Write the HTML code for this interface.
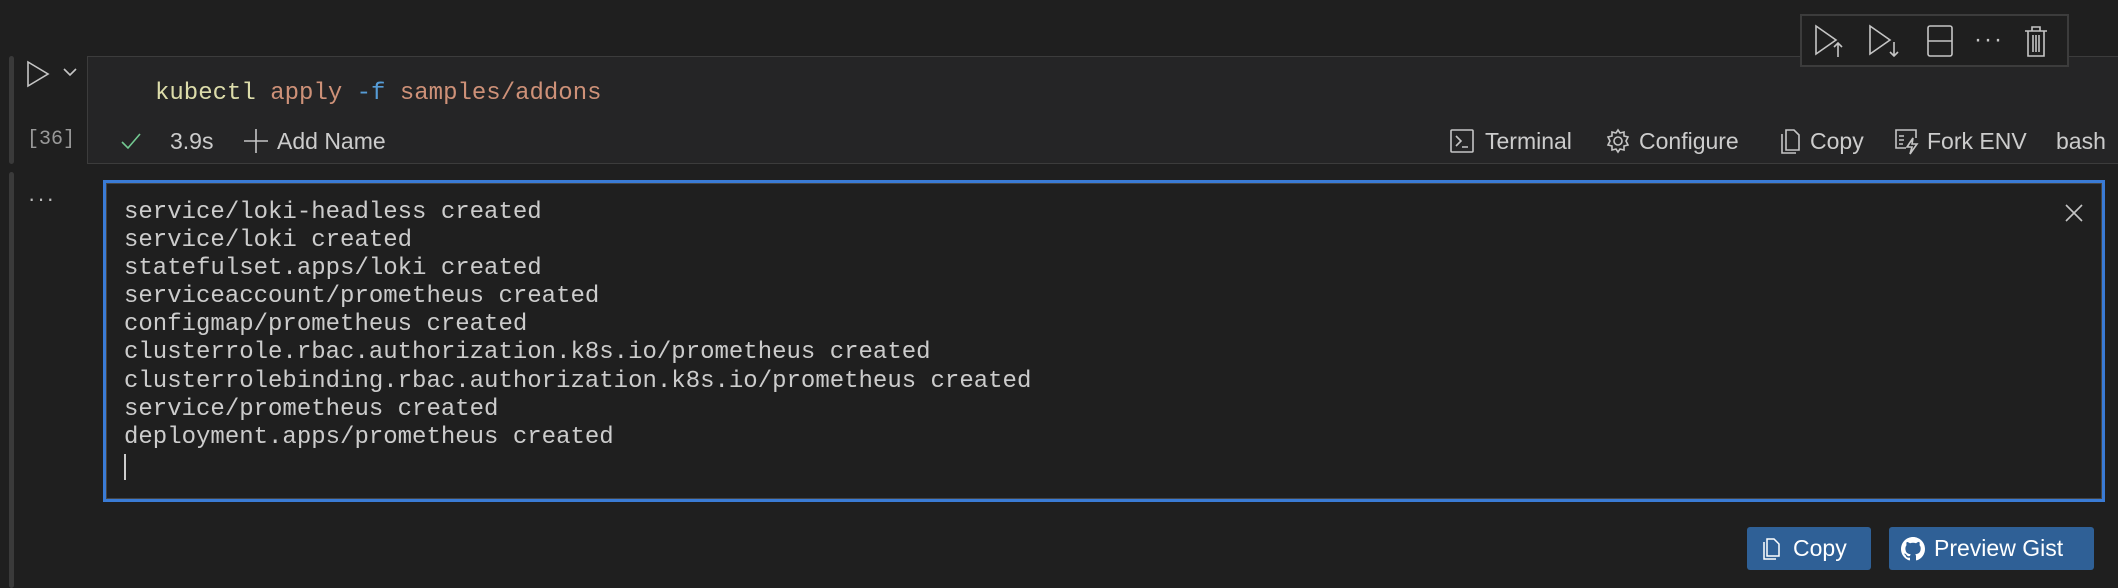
<!DOCTYPE html>
<html><head><style>
body{margin:0;width:2118px;height:588px;background:#1f1f1f;position:relative;overflow:hidden;font-family:"Liberation Sans",sans-serif;color:#cccccc}
.a{position:absolute}
.mono{font-family:"Liberation Mono",monospace}
.bar{position:absolute;left:9px;width:5px;background:#3a3a3a;border-radius:3px}
.ui{font-size:23px;color:#cccccc;line-height:26px}
svg{position:absolute;fill:none;stroke:#c5c5c5;stroke-width:1.6}
.btn{position:absolute;background:#2f6096;border-radius:3px;color:#fff;font-size:23px;height:43px;line-height:43px;top:527px}
</style></head><body>
<div class="bar" style="top:56px;height:108px"></div>
<div class="bar" style="top:172px;height:416px"></div>
<svg style="left:26px;top:60px" width="26" height="28" viewBox="0 0 26 28"><path d="M2 2 L22 14 L2 26 Z"/></svg>
<svg style="left:62px;top:66px" width="16" height="12" viewBox="0 0 16 12"><path d="M2 3 L8 9 L14 3"/></svg>
<div class="a mono" style="left:27px;top:128px;font-size:20px;color:#999">[36]</div>
<div class="a" style="left:28px;top:186px;font-size:22px;color:#bbb;letter-spacing:2px">···</div>
<div class="a" style="left:87px;top:56px;width:2040px;height:106px;background:#252526;border:1px solid #3c3c3c"></div>
<div class="a mono" style="left:155px;top:79px;font-size:24px;line-height:30px;white-space:pre"><span style="color:#dcdcaa">kubectl</span> <span style="color:#ce9178">apply</span> <span style="color:#569cd6">-f</span> <span style="color:#ce9178">samples/addons</span></div>
<svg style="left:119px;top:129px" width="24" height="24" viewBox="0 0 24 24" ><path d="M3 13 L9 19 L21 5" style="stroke:#73c991"/></svg>
<div class="a ui" style="left:170px;top:128px">3.9s</div>
<svg style="left:243px;top:128px" width="26" height="26" viewBox="0 0 26 26"><path d="M13 1 V25 M1 13 H25"/></svg>
<div class="a ui" style="left:277px;top:128px">Add Name</div>
<svg style="left:1450px;top:129px" width="24" height="24" viewBox="0 0 24 24"><rect x="1" y="1" width="22" height="22" rx="1"/><path d="M6 7 L11 12 L6 17 M12 18 H18"/></svg>
<div class="a ui" style="left:1485px;top:128px">Terminal</div>
<svg style="left:1605px;top:128px" width="26" height="26" viewBox="0 0 26 26"><circle cx="13" cy="13" r="4"/><path d="M13 2 L15 5 L19 4 L19 8 L23 9 L21 13 L23 17 L19 18 L19 22 L15 21 L13 24 L11 21 L7 22 L7 18 L3 17 L5 13 L3 9 L7 8 L7 4 L11 5 Z"/></svg>
<div class="a ui" style="left:1639px;top:128px">Configure</div>
<svg style="left:1778px;top:128px" width="24" height="28" viewBox="0 0 24 28"><path d="M4 6 V25 H18"/><path d="M8 2 H16 L21 7 V22 H8 Z"/></svg>
<div class="a ui" style="left:1810px;top:128px">Copy</div>
<svg style="left:1894px;top:128px" width="26" height="28" viewBox="0 0 26 28"><path d="M12 20 H2 V2 H22 V10"/><path d="M5 8 H10 M5 12 H10 M5 16 H9"/><path d="M19 10 L13 19 H18 L16 26 L23 16 H18 Z"/></svg>
<div class="a ui" style="left:1927px;top:128px">Fork ENV</div>
<div class="a ui" style="left:2056px;top:128px">bash</div>
<div class="a" style="left:1800px;top:14px;width:269px;height:53px;background:#1f1f1f;border:2px solid #3c3c3c;box-sizing:border-box"></div>
<svg style="left:1814px;top:24px" width="34" height="34" viewBox="0 0 34 34"><path d="M2 2 L22 16 L2 30 Z M24 33 V19 M20 23 L24 19 L28 23"/></svg>
<svg style="left:1868px;top:24px" width="34" height="34" viewBox="0 0 34 34"><path d="M2 2 L22 16 L2 30 Z M26 18 V32 M22 28 L26 32 L30 28"/></svg>
<svg style="left:1926px;top:24px" width="28" height="34" viewBox="0 0 28 34"><rect x="2" y="2" width="24" height="30" rx="2"/><path d="M2 17 H26"/></svg>
<div class="a" style="left:1974px;top:26px;font-size:24px;color:#c5c5c5;letter-spacing:2px">···</div>
<svg style="left:2023px;top:24px" width="26" height="34" viewBox="0 0 26 34"><path d="M2 7 H24 M9 7 V3 H17 V7 M5 7 V32 H21 V7 M10 11 V28 M13 11 V28 M16 11 V28"/></svg>
<div class="a" style="left:103px;top:180px;width:2002px;height:322px;border:3px solid #3a7bd5;box-sizing:border-box;background:#1f1f1f"><div style="position:absolute;inset:0;border:1px solid #444"></div></div>
<svg style="left:2064px;top:203px" width="20" height="20" viewBox="0 0 20 20"><path d="M2 2 L18 18 M18 2 L2 18"/></svg>
<div class="a mono" style="left:124px;top:199px;font-size:24px;line-height:28.1px;color:#cccccc;white-space:pre">service/loki-headless created
service/loki created
statefulset.apps/loki created
serviceaccount/prometheus created
configmap/prometheus created
clusterrole.rbac.authorization.k8s.io/prometheus created
clusterrolebinding.rbac.authorization.k8s.io/prometheus created
service/prometheus created
deployment.apps/prometheus created</div>
<div class="a" style="left:124px;top:454px;width:2px;height:26px;background:#ccc"></div>
<div class="btn" style="left:1747px;width:124px">
<svg style="left:15px;top:11px;stroke:#fff;stroke-width:1.5" width="20" height="24" viewBox="0 0 20 24"><path d="M2 4 V21 H14"/><path d="M5 1 H12 L17 6 V18 H5 Z"/></svg>
<span style="position:absolute;left:46px">Copy</span></div>
<div class="btn" style="left:1889px;width:205px">
<svg style="left:12px;top:10px;stroke:none;fill:#fff" width="24" height="24" viewBox="0 0 16 16"><path d="M8 0C3.58 0 0 3.58 0 8c0 3.54 2.29 6.53 5.47 7.59.4.07.55-.17.55-.38 0-.19-.01-.82-.01-1.49-2.01.37-2.53-.49-2.69-.94-.09-.23-.48-.94-.82-1.13-.28-.15-.68-.52-.01-.53.63-.01 1.08.58 1.23.82.72 1.21 1.87.87 2.33.66.07-.52.28-.87.51-1.07-1.78-.2-3.64-.89-3.64-3.95 0-.87.31-1.59.82-2.15-.08-.2-.36-1.02.08-2.12 0 0 .67-.21 2.2.82.64-.18 1.32-.27 2-.27.68 0 1.36.09 2 .27 1.53-1.04 2.2-.82 2.2-.82.44 1.1.16 1.92.08 2.12.51.56.82 1.27.82 2.15 0 3.07-1.87 3.75-3.65 3.95.29.25.54.73.54 1.48 0 1.07-.01 1.93-.01 2.2 0 .21.15.46.55.38A8.013 8.013 0 0016 8c0-4.42-3.58-8-8-8z"/></svg>
<span style="position:absolute;left:45px">Preview Gist</span></div>
</body></html>
